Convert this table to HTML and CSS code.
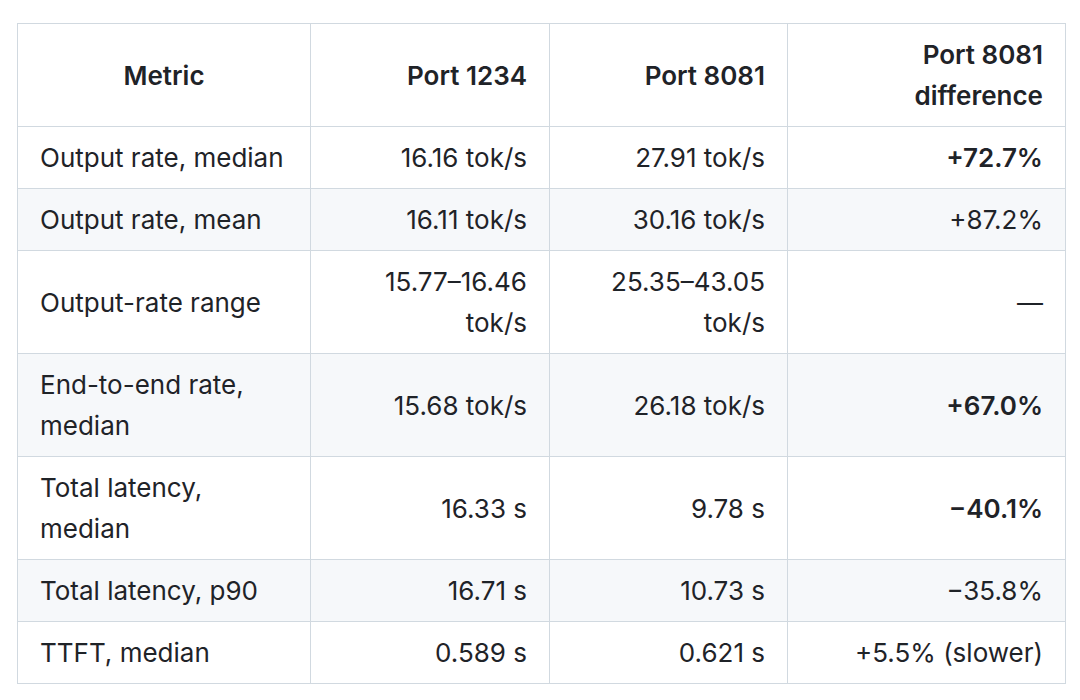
FILE: index.html
```html
<!DOCTYPE html>
<html>
<head>
<meta charset="utf-8">
<link rel="stylesheet" href="styles.css">
</head>
<body>
<div class="page">
<table class="metrics">
  <colgroup>
    <col class="c1"><col class="c2"><col class="c3"><col class="c4">
  </colgroup>
  <thead>
    <tr>
      <th class="center">Metric</th>
      <th>Port 1234</th>
      <th>Port 8081</th>
      <th>Port 8081 difference</th>
    </tr>
  </thead>
  <tbody>
    <tr><td class="name">Output rate, median</td><td>16.16 tok/s</td><td>27.91 tok/s</td><td><strong>+72.7%</strong></td></tr>
    <tr><td class="name">Output rate, mean</td><td>16.11 tok/s</td><td>30.16 tok/s</td><td>+87.2%</td></tr>
    <tr><td class="name">Output-rate range</td><td>15.77–16.46 tok/s</td><td>25.35–43.05 tok/s</td><td>—</td></tr>
    <tr><td class="name">End-to-end rate, median</td><td>15.68 tok/s</td><td>26.18 tok/s</td><td><strong>+67.0%</strong></td></tr>
    <tr><td class="name">Total latency, median</td><td>16.33 s</td><td>9.78 s</td><td><strong>−40.1%</strong></td></tr>
    <tr><td class="name">Total latency, p90</td><td>16.71 s</td><td>10.73 s</td><td>−35.8%</td></tr>
    <tr><td class="name">TTFT, median</td><td>0.589 s</td><td>0.621 s</td><td>+5.5% (slower)</td></tr>
  </tbody>
</table>
</div>
</body>
</html>
```

FILE: styles.css
```css
html, body {
  margin: 0;
  padding: 0;
  background: #ffffff;
}

.page {
  padding: 23px 16px 0 17px;
}

.metrics {
  border-collapse: collapse;
  table-layout: fixed;
  width: 1048px;
  font-family: Inter, "Liberation Sans", sans-serif;
  font-size: 26px;
  line-height: 41px;
  color: #1f2328;
}

.c1 { width: 293px; }
.c2 { width: 239px; }
.c3 { width: 238px; }
.c4 { width: 278px; }

.metrics th,
.metrics td {
  border: 1px solid #d1d9e0;
  padding: 10px 22px;
  text-align: right;
  vertical-align: middle;
}

.metrics th {
  font-weight: 600;
}

.metrics th.center {
  text-align: center;
}

.metrics td.name {
  text-align: left;
}

.metrics tbody tr:nth-child(even) {
  background: #f6f8fa;
}

.metrics strong {
  font-weight: 600;
}
```
